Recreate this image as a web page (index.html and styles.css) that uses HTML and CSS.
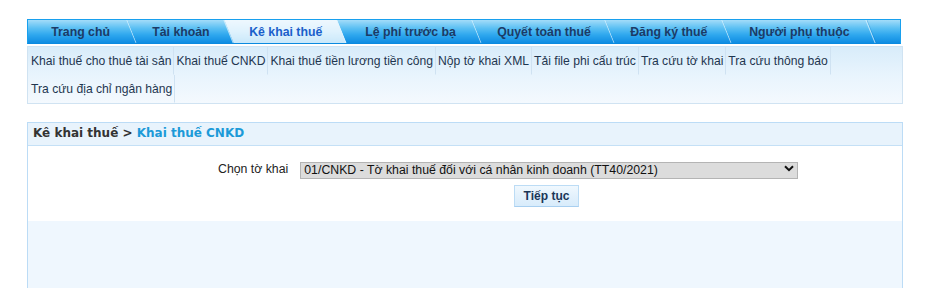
FILE: index.html
```html
<!DOCTYPE html>
<html lang="vi">
<head>
<meta charset="utf-8">
<title>Khai thuế CNKD</title>
<link rel="stylesheet" href="styles.css">
</head>
<body>
<nav class="tabs">
  <a class="tab tab-home"><span>Trang chủ</span></a>
  <a class="tab tab-account"><span>Tài khoản</span></a>
  <a class="tab tab-declare active"><span>Kê khai thuế</span></a>
  <a class="tab tab-fee"><span>Lệ phí trước bạ</span></a>
  <a class="tab tab-settle"><span>Quyết toán thuế</span></a>
  <a class="tab tab-register"><span>Đăng ký thuế</span></a>
  <a class="tab tab-dependent"><span>Người phụ thuộc</span></a>
</nav>
<div class="submenu">
  <a class="sub-item">Khai thuế cho thuê tài sản</a>
  <a class="sub-item">Khai thuế CNKD</a>
  <a class="sub-item">Khai thuế tiền lương tiền công</a>
  <a class="sub-item">Nộp tờ khai XML</a>
  <a class="sub-item">Tải file phi cấu trúc</a>
  <a class="sub-item">Tra cứu tờ khai</a>
  <a class="sub-item">Tra cứu thông báo</a>
  <a class="sub-item">Tra cứu địa chỉ ngân hàng</a>
</div>
<section class="panel">
  <div class="panel-head">Kê khai thuế &gt; <span class="crumb-current">Khai thuế CNKD</span></div>
  <div class="panel-body">
    <div class="form-row">
      <label class="form-label" for="tokhai">Chọn tờ khai</label>
      <div class="select-wrap">
        <select id="tokhai" class="form-select">
          <option>01/CNKD - Tờ khai thuế đối với cá nhân kinh doanh (TT40/2021)</option>
        </select>
        <svg class="select-arrow" width="10" height="7" viewBox="0 0 10 7"><path d="M1 1.2 L5 5.2 L9 1.2" fill="none" stroke="#111" stroke-width="2"/></svg>
      </div>
    </div>
    <div class="button-row">
      <button class="btn">Tiếp tục</button>
    </div>
  </div>
  <div class="panel-foot"></div>
</section>
</body>
</html>
```
FILE: styles.css
```css
* { box-sizing: border-box; }
html, body { margin: 0; padding: 0; background: #fff; }
body { font-family: "Liberation Sans", Arial, sans-serif; }

.tabs {
  display: flex;
  width: 874px;
  height: 25px;
  margin: 19px 0 0 27px;
  border: 1px solid #18a0ee;
  border-bottom-color: #0a8ae0;
  overflow: hidden;
  background: linear-gradient(to bottom, #a3dcf9 0%, #5cc0f3 35%, #2ea7ee 65%, #0e8ce2 100%);
}
.tab {
  flex: none;
  display: flex;
  align-items: center;
  justify-content: center;
  height: 100%;
  transform: skewX(22deg);
  border-right: 1px solid rgba(225, 245, 255, 0.75);
  box-shadow: 1px 0 0 rgba(10, 110, 190, 0.25);
  background: linear-gradient(to bottom, #a3dcf9 0%, #5cc0f3 35%, #2ea7ee 65%, #0e8ce2 100%);
  font-weight: bold;
  font-size: 12.3px;
  color: #1c3b66;
  text-decoration: none;
}
.tab span { transform: skewX(-22deg); white-space: nowrap; padding-left: 2px; }
.tab.active {
  background: linear-gradient(to bottom, #eef8fe 0%, #dff2fd 50%, #c9e8fa 100%);
  color: #1a5fcb;
}
.tab-home { width: 104px; }
.tab-account { width: 97px; }
.tab-declare { width: 113px; }
.tab-fee { width: 135px; }
.tab-settle { width: 133px; }
.tab-register { width: 117px; }
.tab-dependent { width: 144px; }

.submenu {
  display: flex;
  flex-wrap: wrap;
  width: 876px;
  margin: 2px 0 0 27px;
  padding: 0 0 0 1px;
  border: 1px solid #d0e3f2;
  background: linear-gradient(to bottom, #d8ecfa 0%, #e8f4fd 50%, #f4f9fe 100%);
}
.sub-item {
  height: 28px;
  line-height: 28px;
  padding: 0 2px;
  font-size: 12.15px;
  color: #1f3650;
  border-right: 1px solid #cfe2f2;
  border-bottom: 1px solid transparent;
  white-space: nowrap;
  cursor: pointer;
}

.panel {
  width: 876px;
  margin: 18px 0 0 27px;
  border: 1px solid #bcdcf6;
  border-bottom: none;
}
.panel-head {
  height: 23px;
  line-height: 21px;
  padding-left: 5px;
  background: #e8f3fc;
  border-bottom: 1px solid #c4e0f6;
  font-family: "DejaVu Sans", Verdana, sans-serif;
  font-weight: bold;
  font-size: 12px;
  color: #333;
}
.crumb-current { color: #1c9ad8; }

.panel-body {
  padding: 14px 0 14px 0;
  background: #fff;
}
.form-row {
  display: flex;
  align-items: center;
  padding-left: 190px;
  gap: 12px;
  height: 17px;
}
.form-label {
  font-size: 12.3px;
  color: #222;
}
.select-wrap { position: relative; width: 498px; height: 17px; }
.form-select {
  appearance: none;
  -webkit-appearance: none;
  width: 100%;
  height: 17px;
  margin: 0;
  padding: 0 0 0 3px;
  border: 1px solid #b4b4b4;
  border-radius: 0;
  background: #dcdcdc;
  font-family: "Liberation Sans", Arial, sans-serif;
  font-size: 12.3px;
  line-height: 15px;
  color: #111;
}
.select-arrow {
  position: absolute;
  right: 4px;
  top: 5px;
  pointer-events: none;
}
.button-row {
  display: flex;
  padding-left: 486px;
  margin-top: 8px;
}
.btn {
  width: 65px;
  height: 22px;
  padding: 0;
  border: 1px solid #bcdcf5;
  border-bottom-color: #a8cff0;
  border-radius: 0;
  background: linear-gradient(to bottom, #f0f8fe 0%, #e3f1fc 50%, #d8ecfb 100%);
  font-family: "Liberation Sans", Arial, sans-serif;
  font-weight: bold;
  font-size: 12px;
  color: #1b3658;
}
.panel-foot {
  height: 67px;
  background: #eff7fe;
}
```
